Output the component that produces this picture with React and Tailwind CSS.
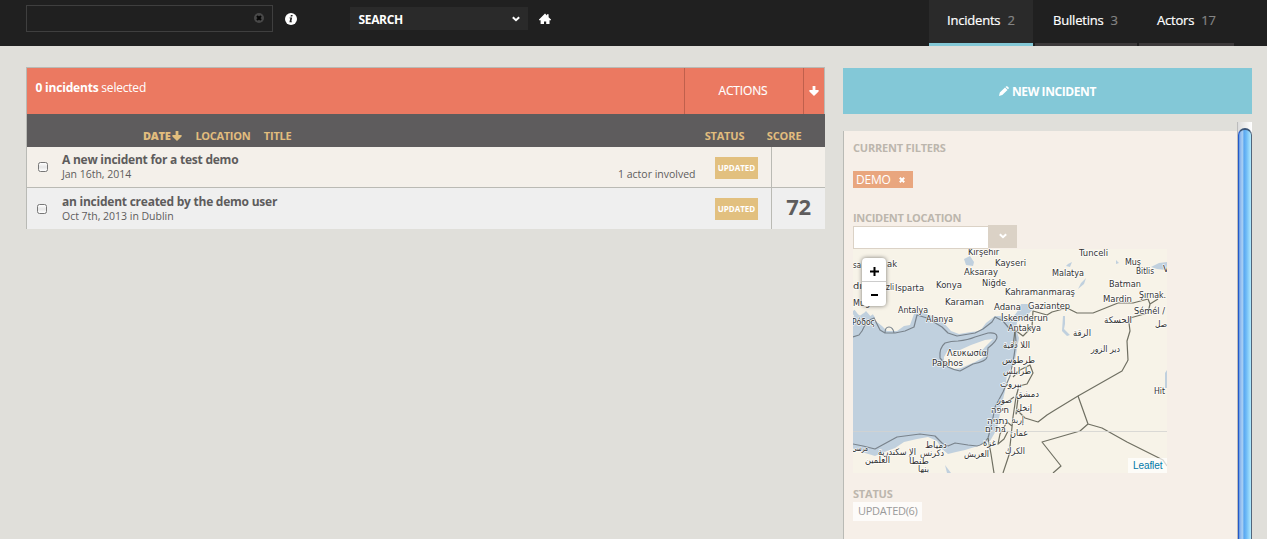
import React from "react";

function DownArrow({ className }) {
  return (
    <svg className={className} viewBox="0 0 10 10" fill="currentColor">
      <path d="M3.6 0h2.8v4h3.2v1.6L5 10 .4 5.6V4h3.2z" />
    </svg>
  );
}

function Chevron({ className }) {
  return (
    <svg className={className} viewBox="0 0 8 6" fill="none" stroke="currentColor" strokeWidth="2">
      <path d="M.8 1.2 4 4.2l3.2-3" />
    </svg>
  );
}

function Check() {
  return (
    <span className="block h-[10px] w-[10px] rounded-[2.5px] border border-[#777] bg-linear-to-b from-white via-[#e6e6e6] to-white" />
  );
}

const tabs = [
  { name: "Incidents", count: 2, box: "w-[104px] pl-[18px] bg-[#2a2a2a] border-[#83c8d6]" },
  { name: "Bulletins", count: 3, box: "w-[102px] pl-[18px] border-[#3d3a3b]" },
  { name: "Actors", count: 17, box: "w-[95px] pl-[18px] border-[#3d3a3b]" },
];

function Header() {
  return (
    <header className="flex h-[46px] shrink-0 items-start bg-[#202020]">
      <div className="mt-[5px] ml-[26px] flex h-[27px] w-[247px] items-center justify-end border border-[#3f3f3f] pr-[8px] pb-px">
        <svg className="h-[10px] w-[10px]" viewBox="0 0 10 10">
          <circle cx="5" cy="5" r="5" fill="#484848" />
          <path d="M3 3l4 4M7 3L3 7" stroke="#050505" strokeWidth="2.2" />
        </svg>
      </div>
      <svg className="mt-[13px] ml-[12px] h-[12px] w-[12px]" viewBox="0 0 12 12">
        <circle cx="6" cy="6" r="6" fill="#fff" />
        <path d="M5.9 2h1.8l-.4 1.6H5.5zM4.6 4.4h2.6L6.3 8.4h.8L6.9 9.3H4.4l.9-4h-.9z" fill="#222" />
      </svg>
      <div className="mt-[7px] ml-[53px] flex h-[23px] w-[178px] items-center justify-between bg-[#2a2a2a] pr-[8px] pl-[8.5px] text-white">
        <span className="mt-[2px] text-[12px] leading-none font-bold tracking-[-0.35px]">SEARCH</span>
        <Chevron className="mt-[1px] h-[6px] w-[8px]" />
      </div>
      <svg className="mt-[13px] ml-[11px] h-[12px] w-[12px]" viewBox="0 0 12 12" fill="#fff">
        <path d="M6 .6l2 2V1.2h1.6v3L12 6.6v.6h-1.5V11H7.2V8.4H5V11H1.6V7.2H0v-.6z" />
      </svg>
      <nav className="ml-auto flex gap-[2px] pr-[33px]">
        {tabs.map((t) => (
          <div key={t.name} className={"h-[46px] border-b-3 pt-[14px] text-[13px] leading-none font-medium tracking-[-0.2px] whitespace-nowrap text-white [-webkit-text-stroke:0.2px] " + t.box}>
            {t.name}
            <span className="ml-[7px] text-[#858585]">{t.count}</span>
          </div>
        ))}
      </nav>
    </header>
  );
}

function Row({ title, sub, actors, score, tone, box, pad }) {
  return (
    <div className={"flex " + tone}>
      <div className={"w-[35px] " + box}>
        <Check />
      </div>
      <div className={"flex-1 leading-none " + pad}>
        <div className="text-[12px] font-bold tracking-[-0.24px]">{title}</div>
        <div className="mt-[3px] text-[10.5px] tracking-[-0.02px]">{sub}</div>
      </div>
      <div className="w-[97px] pt-[22px] text-right text-[10.5px] leading-none whitespace-nowrap">
        <span className="mr-[20px]">{actors}</span>
      </div>
      <div className="w-[56px] pt-[10px]">
        <div className="flex h-[22px] w-[43px] items-center justify-center bg-[#e2c07f] text-[8px] leading-none font-bold text-white">
          UPDATED
        </div>
      </div>
      <div className="w-[54px] border-l border-[#babab4] pt-[7px] text-center text-[22px] leading-none font-bold tracking-[-0.3px]">{score}</div>
    </div>
  );
}

function Incidents() {
  return (
    <section className="h-[162px] w-[799px] border-t border-l border-[#b9bab5] text-[#5e5c5c]">
      <div className="flex h-[46px] border-r border-[#b9bab5] bg-[#eb7961] text-[12px] leading-none text-white">
        <div className="flex-1 pt-[14px] pl-[8.5px] tracking-[-0.2px]">
          <b>0 incidents</b> selected
        </div>
        <div className="w-[119px] border-l border-[#c0604c] pt-[17px] text-center">
          <span className="mr-[2px] tracking-[-0.15px] [-webkit-text-stroke:0.15px]">ACTIONS</span>
        </div>
        <div className="w-[21px] border-l border-[#c0604c] pt-[18px] pl-[5px]">
          <DownArrow className="h-[10px] w-[10px]" />
        </div>
      </div>
      <div className="flex h-[33px] bg-[#5e5c5d] pt-[16px] text-[11px] leading-none font-bold tracking-[-0.3px] text-[#e2bd7d]">
        <span className="ml-[116px] font-extrabold tracking-[-0.3px]">DATE</span>
        <DownArrow className="mt-px ml-[2px] h-[10px] w-[10px]" />
        <span className="ml-[13px]">LOCATION</span>
        <span className="ml-[13.5px] tracking-[-0.2px]">TITLE</span>
        <span className="ml-auto tracking-[-0.2px]">STATUS</span>
        <span className="mr-[23.5px] ml-[22.5px] tracking-[-0.1px]">SCORE</span>
      </div>
      <Row title="A new incident for a test demo" sub="Jan 16th, 2014" actors="1 actor involved" score="" box="pl-[11px] pt-[15px]" pad="pt-[7px]" tone="h-[41px] bg-[#f4f0ea] border-b border-[#babab4]" />
      <Row title="an incident created by the demo user" sub="Oct 7th, 2013 in Dublin" actors="" score="72" box="pl-[10px] pt-[16px]" pad="pt-[8px]" tone="h-[41px] bg-[#efefef]" />
    </section>
  );
}

// Place labels: [text, left, baseline, width]
const places = [
  ["Kirşehir", 968, 255, 31], ["Kayseri", 995, 266, 31], ["Aksaray", 964, 275, 34], ["Konya", 936, 288, 26],
  ["Niğde", 982, 286, 24], ["Isparta", 895, 291, 29], ["sa", 853, 268, 8], ["ak", 887, 267, 10], ["dı", 853, 289, 9], ["zli", 886, 290, 8],
  ["Karaman", 945, 305, 39], ["Kahramanmaraş", 1005, 295, 70], ["Antalya", 898, 313, 30], ["Alanya", 926, 322, 27],
  ["Adana", 994, 310, 27], ["Gaziantep", 1028, 309, 42], ["İskenderun", 1001, 321, 47], ["Antakya", 1008, 331, 33],
  ["Malatya", 1052, 276, 32], ["Tunceli", 1079, 255.5, 29], ["Muş", 1125, 265, 16], ["Bitlis", 1136, 274, 18], ["V", 1163, 272, 6],
  ["Batman", 1109, 287, 32], ["Mardin", 1103, 302, 29], ["Şırnak.", 1139, 298, 27], ["Sémél /", 1134, 314, 31],
  ["Muğ", 853, 306, 17], ["Ρόδος", 852, 325, 23], ["Λευκωσία", 947, 356, 40], ["Paphos", 932, 366, 31], ["Hit", 1154, 394, 11],
  ["اللا ذقية", 1003, 348, 27], ["الحسكة", 1104, 323, 28], ["صل", 1155, 327, 12], ["الرقة", 1073, 336, 18], ["دير الزور", 1091, 352, 29],
  ["طرطوس", 1002, 363, 33], ["طرابلس", 1003, 374, 28], ["بيروت", 1000, 387, 22], ["دمشق", 1016, 397, 23], ["صور", 997, 403, 15],
  ["إنخل", 1016, 411, 16], ["חיפה", 991, 413, 18], ["إربد", 1012, 423, 12], ["נתניה", 987, 424, 21], ["בת ים", 985, 432, 21],
  ["عمان", 1010, 436, 18], ["غزة", 983, 446, 13], ["الكرك", 1005, 454, 20], ["العريش", 964, 457, 25], ["دمياط", 925, 448, 22],
  ["دكرنس", 920, 456, 24], ["الإ سكندرية", 878, 455, 38], ["مرسى", 852, 451, 16], ["العلمين", 865, 463, 25], ["طنطا", 909, 464, 20], ["بنها", 918, 472, 11],
];

function Map() {
  return (
    <div className="relative h-[224px] w-[314px] overflow-hidden">
      <svg className="block h-[224px] w-[314px]" viewBox="853 249 314 224">
        <path fill="#f7f3e8" d="M853 249h314v224H853z" />
        <path
          fill="#c0d0de"
          d="M853 317l4-3 4 2 5-5 7 8 9 7 5 5 10 0 7-5 6-1 4-11 8-2 7 3 8 2 6 5 8 9 8 3 12-2 9-1 6-8 9-7 8 0 7 5 7-9 4-8 8 0 4 5-8 9-8 4-1 7 3 9-2 11-2 12-8 13-2 17-4 17-4 21-7 12-12 5-13 4-9 2-8 2-6-5-5-8-9-4-11 2-13 3-9 6-8 3-12 5-10-3-13-5z"
        />
        <path fill="#f7f3e8" d="M944 357l4-7 12 0 11-5 14-5 8-1-8 8-6 7 5 3-9 5-14 6-7 1-10-4z" />
        <g fill="#c0d0de">
          <path d="M964 259l6-3 4 6-1 4-7-1zM1151 267l8-4 8-1v8l-10-1zM1116 260l3 3-3 1zM1068 264l4-2-2 5-4-1zM1081 283l5-5-2 6-6 5zM1165 373l2-3v18h-2zM945 465l6 8h-4zM1063 316l2 0 0 8-1 5 6 6-3 1-5-5z" />
        </g>
        <path d="M853 311l6 8 4-3 4 5 7-5" fill="none" stroke="#c0d0de" strokeWidth="4" />
        <g fill="none" stroke="#79838c" strokeWidth="1.2" strokeLinejoin="round">
          <path d="M853 337l6-2 3-4 5-10 7-3 6 12 5 3 10 0 10-2 9-4 3-12 10 3 15 9 6 6 9 3 18-3 8-4 9-7 3-5 8 4 5 6 7 5" />
          <path d="M885 333q0-6 4-6t5 6" />
          <path d="M1015 330l1 12-2 14-4 20-7 16-8 15-3 16-4 15q-5 7-11 8l-9-1-13-2-7 3-6-3-7-7-15-2-23 3-22 12-12-3-15-3" />
          <path d="M940 358q-1-10 5-15 6-2 13-2 10-1 17-4l13-4q9-1 9 4 0 4-9 11l-1 9q0 4-14 7l-13 7q-6-1-12-4z" />
        </g>
        <g fill="none" stroke="#6f6f62" strokeWidth="1.2" strokeLinejoin="round">
          <path d="M1013 347l2-17 8 6 9-9 1-16 14 4 5-3 15-4 10 5h16l25-10h15l15-4 2 5 8-5M1150 304l-2 9-18 5-1 5 1 8-3 10 1 19-1 2-5 9-44 25-23 14-8 5-9 7-13-4-8-8" />
          <path d="M1078 396l10 28 14 4 25 14 36 18 4 6M1088 424l-8 7-38 11 19 24-8 7" />
          <path d="M1013 377l7-7 10-5 3 8-6 11-8 2-3 11-3 20-2 20-2 18-6 18M1014 397l-7 5M988 438l3 16 3 19M1008 431l-4 8-6 5 2-10 7-12 5 4M1018 398l-2 16 3-5" />
        </g>
        <path d="M853 431.5h314" stroke="#d2d2cf" strokeOpacity=".8" />
        <g fill="#333" stroke="#fff" strokeWidth="1.6" strokeOpacity=".8" strokeLinejoin="round" fontSize="9" fontFamily="'DejaVu Sans', sans-serif">
          {places.map(([t, x, y, w]) => (
            <text key={t} x={x} y={y} textLength={w} lengthAdjust="spacingAndGlyphs" paintOrder="stroke" direction="ltr">
              {t}
            </text>
          ))}
        </g>
      </svg>
      <div className="absolute top-[9px] left-[9px] h-[48px] w-[24px] rounded-[4px] bg-white shadow-[0_0_4px_rgba(0,0,0,0.5)]">
        <svg className="block h-[48px] w-[24px]" viewBox="0 0 24 48" stroke="#000">
          <path d="M8 13.5h9M12.5 9v9M9 37h7" strokeWidth="2" />
          <path d="M0 23.5h24" stroke="#ccc" />
        </svg>
      </div>
      <div className="absolute right-0 bottom-0 h-[15px] w-[39px] bg-white/70 pt-[3px] pl-[5px] font-['Liberation_Sans',sans-serif] text-[10px] leading-none tracking-[-0.1px] text-[#0078a8]">
        Leaflet
      </div>
    </div>
  );
}

function Filters() {
  return (
    <div className="mt-[9px] w-[394px] border-l border-[#b9bab5] bg-[#f6efe8] pl-[9px] leading-none">
      <h3 className="pt-[11px] text-[11px] leading-none font-bold tracking-[-0.22px] text-[#bcb6ad]">CURRENT FILTERS</h3>
      <div className="mt-[18px] flex h-[17px] w-[60px] items-center bg-[#e9a67e] pl-[3px] text-[12px] leading-none tracking-[-0.2px] text-white">
        DEMO
        <svg className="mt-px ml-[8px] h-[6px] w-[6px]" viewBox="0 0 6 6" stroke="#fff" strokeWidth="2">
          <path d="M.8.8l4.4 4.4M5.2.8L.8 5.2" />
        </svg>
      </div>
      <h3 className="mt-[24px] text-[11px] leading-none font-bold tracking-[-0.28px] text-[#bcb6ad]">INCIDENT LOCATION</h3>
      <div className="mt-[2px] flex h-[24px] items-start">
        <div className="mt-px h-[23px] w-[135px] border border-r-0 border-[#dbd2c6] bg-white" />
        <div className="flex h-[23px] w-[29px] items-center justify-center bg-[#dbd2c6] pb-[2px] text-white">
          <Chevron className="h-[6px] w-[8px]" />
        </div>
      </div>
      <Map />
      <h3 className="mt-[15px] text-[11px] leading-none font-bold tracking-[-0.2px] text-[#bcb6ad]">STATUS</h3>
      <div className="mt-[3px] h-[19px] w-[69px] bg-[#fdfbf9] pt-[3px] pl-[5px] text-[11px] leading-none tracking-[-0.3px] text-[#9a9a9a]">
        UPDATED(6)
      </div>
    </div>
  );
}

function ScrollBar() {
  return (
    <div className="flex w-[15px] flex-col border-l border-[#bcbcbc] bg-linear-to-r from-[#dcdcdc] to-white">
      <div className="mt-[6px] w-[14px] flex-1 rounded-t-[7px] border-t-2 border-r border-l border-t-[#3a5578] border-r-[#52667c] border-l-[#2459c8] bg-[linear-gradient(90deg,#5d92e4_0%,#98c0f0_15%,#a5cdf3_30%,#5ba7ef_42%,#6cb9f6_60%,#a9e4fc_95%)]" />
    </div>
  );
}

export default function App() {
  return (
    <div className="flex h-[539px] w-[1267px] flex-col overflow-hidden bg-[#e0dfda] font-['Open_Sans',sans-serif]">
      <Header />
      <main className="flex min-h-0 flex-1 gap-[18px] pl-[26px]">
        <div className="pt-[21px]">
          <Incidents />
        </div>
        <aside className="flex w-[409px] flex-col pt-[22px]">
          <button className="flex h-[46px] shrink-0 items-center justify-center bg-[#83c8d7] pt-px text-[12px] leading-none font-bold text-white">
            <svg className="mr-[3px] mb-[2px] h-[10px] w-[10px]" viewBox="0 0 10 10" fill="#fff">
              <path d="M7.3.3Q8 0 8.6.5l1 1q.5.6 0 1.2L9 3.3 6.5.9zM6 1.5L8.5 4 3.3 9 0 10l.8-3.4z" />
            </svg>
            <span className="tracking-[-0.4px]">NEW INCIDENT</span>
          </button>
          <div className="mt-[8px] flex min-h-0 flex-1 overflow-hidden">
            <Filters />
            <ScrollBar />
          </div>
        </aside>
      </main>
    </div>
  );
}
